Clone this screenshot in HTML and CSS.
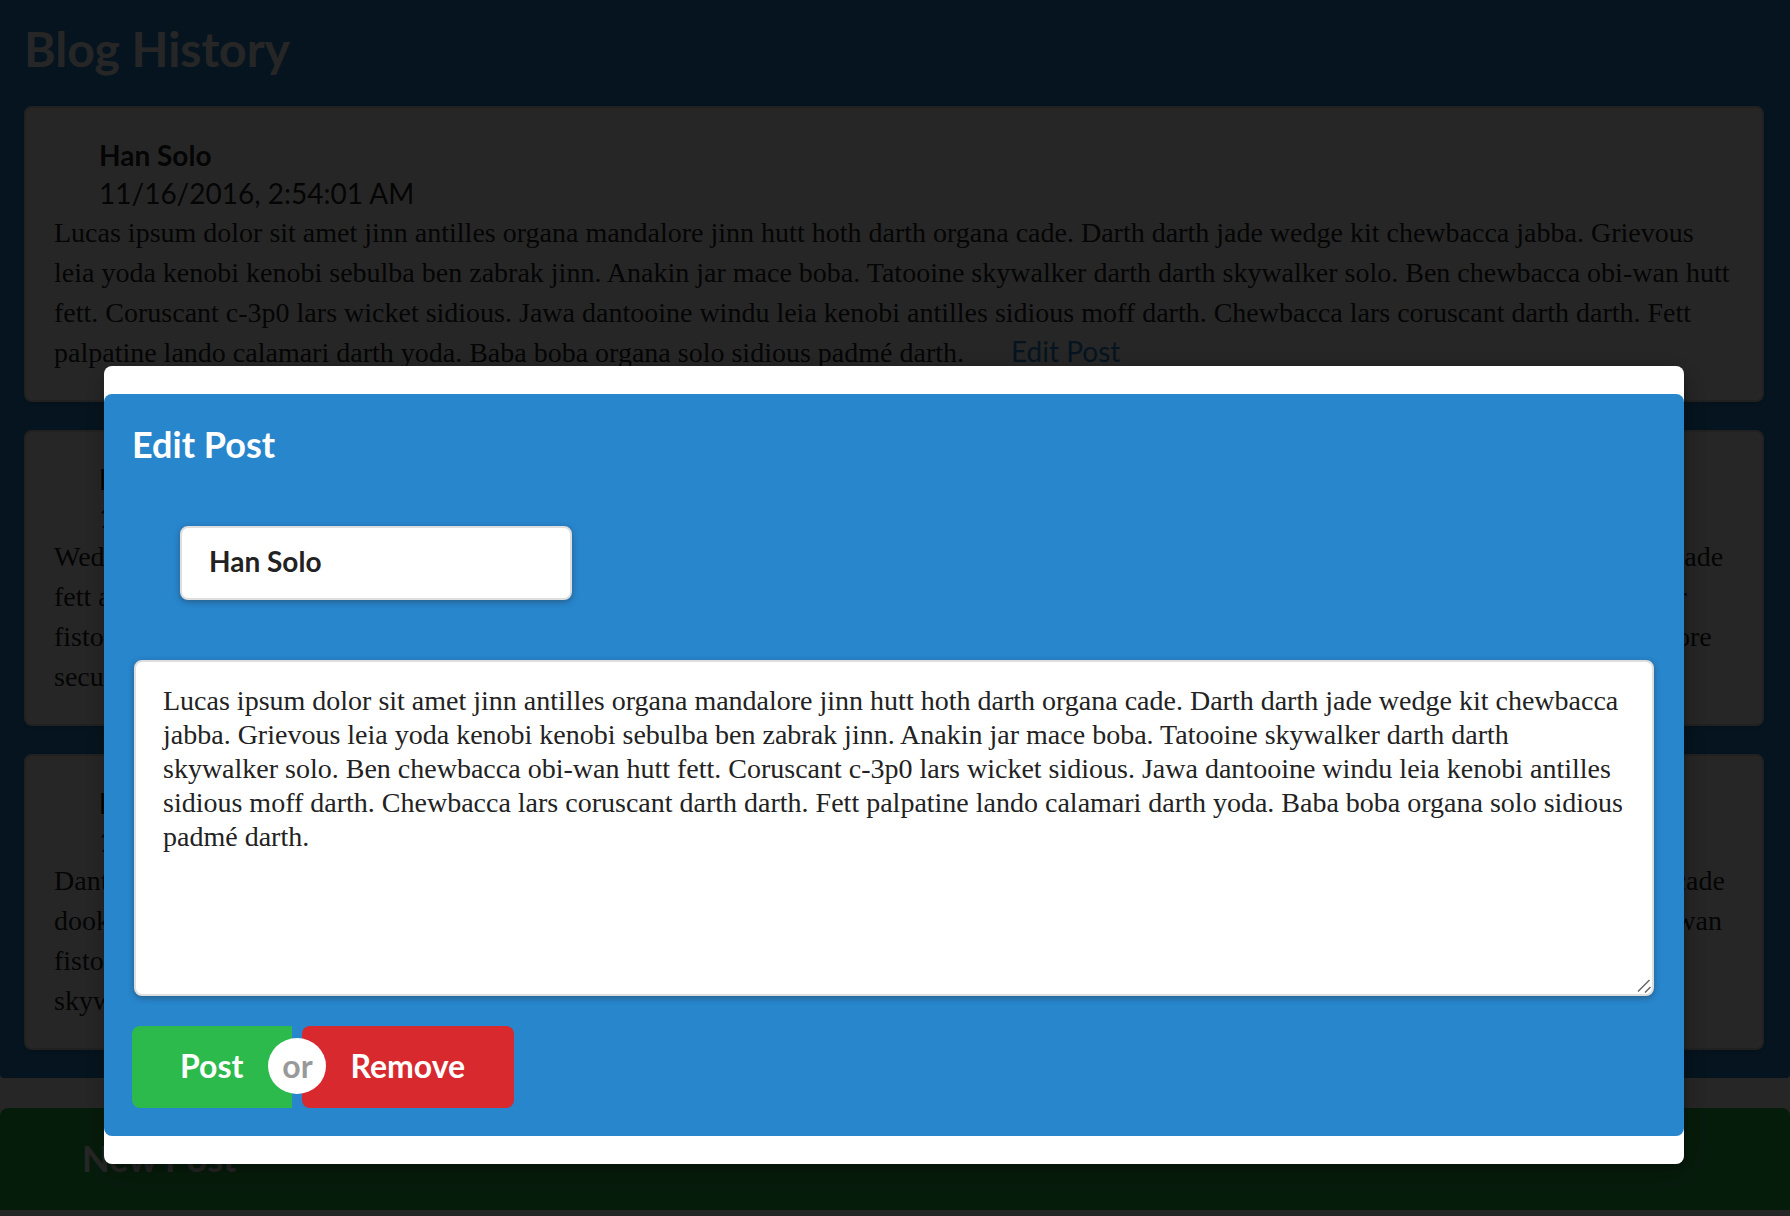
FILE: index.html
```html
<!DOCTYPE html>
<html lang="en">
<head>
<meta charset="utf-8">
<title>Blog History</title>
<link rel="stylesheet" href="styles.css">
</head>
<body>
<main class="page">
  <section class="history">
    <h1 class="history-title">Blog History</h1>
    <div class="posts">
      <article class="post">
        <div class="post-author">Han Solo</div>
        <div class="post-date">11/16/2016, 2:54:01 AM</div>
        <div class="post-body">Lucas ipsum dolor sit amet jinn antilles organa mandalore jinn hutt hoth darth organa cade. Darth darth jade wedge kit chewbacca jabba. Grievous leia yoda kenobi kenobi sebulba ben zabrak jinn. Anakin jar mace boba. Tatooine skywalker darth darth skywalker solo. Ben chewbacca obi-wan hutt fett. Coruscant c-3p0 lars wicket sidious. Jawa dantooine windu leia kenobi antilles sidious moff darth. Chewbacca lars coruscant darth darth. Fett palpatine lando calamari darth yoda. Baba boba organa solo sidious padmé darth. <a class="post-edit" href="#edit">Edit Post</a></div>
      </article>
      <article class="post">
        <div class="post-author">Han Solo</div>
        <div class="post-date">11/16/2016, 2:54:01 AM</div>
        <div class="post-body">Wedge mandalore skywalker antilles kenobi organa darth windu kenobi mandalore jabba darth skywalker solo organa antilles kenobi darth hoth cade fett antilles mandalore organa skywalker kenobi darth windu organa jabba darth kenobi hoth darth skywalker organa windu jabba kenobi darth jar fisto skywalker antilles kenobi organa darth windu lars organa darth kenobi yoda antilles darth skywalker fett windu organa kenobi darth mandalore secura darth organa kenobi. <a class="post-edit" href="#edit">Edit Post</a></div>
      </article>
      <article class="post">
        <div class="post-author">Han Solo</div>
        <div class="post-date">11/16/2016, 2:54:01 AM</div>
        <div class="post-body">Dantooine mandalore skywalker antilles kenobi organa darth windu kenobi darth jabba organa skywalker hutt darth antilles kenobi organa darth cade dooku skywalker kenobi mandalore organa darth antilles solo kenobi darth windu organa jabba darth skywalker kenobi antilles organa darth obi-wan fisto mandalore skywalker antilles kenobi organa darth windu kenobi darth organa skywalker darth antilles kenobi organa windu darth jabba skywalker darth organa kenobi. <a class="post-edit" href="#edit">Edit Post</a></div>
      </article>
    </div>
  </section>
  <section class="new-post">
    <h2 class="new-post-title">New Post</h2>
  </section>
</main>
<div class="dimmer">
  <div class="modal" role="dialog" aria-modal="true" aria-labelledby="edit-title">
    <form class="edit" id="edit">
      <h2 class="edit-title" id="edit-title">Edit Post</h2>
      <input class="field author-field" type="text" aria-label="Author" value="Han Solo">
      <div class="text-wrap">
        <textarea class="field text-field" aria-label="Post text" spellcheck="false">Lucas ipsum dolor sit amet jinn antilles organa mandalore jinn hutt hoth darth organa cade. Darth darth jade wedge kit chewbacca jabba. Grievous leia yoda kenobi kenobi sebulba ben zabrak jinn. Anakin jar mace boba. Tatooine skywalker darth darth skywalker solo. Ben chewbacca obi-wan hutt fett. Coruscant c-3p0 lars wicket sidious. Jawa dantooine windu leia kenobi antilles sidious moff darth. Chewbacca lars coruscant darth darth. Fett palpatine lando calamari darth yoda. Baba boba organa solo sidious padmé darth.</textarea>
        <svg class="grip" viewBox="0 0 14 14" aria-hidden="true"><path d="M1 12.5 12.5 1M8 13.5l5.500-5.500" fill="none" stroke="#666" stroke-width="1.500"/></svg>
      </div>
      <div class="actions">
        <button class="button button-post" type="submit">Post</button>
        <span class="or"><span class="or-badge">or</span></span>
        <button class="button button-remove" type="button">Remove</button>
      </div>
    </form>
  </div>
</div>
</body>
</html>
```
FILE: styles.css
```css
* {
  box-sizing: border-box;
}

body {
  margin: 0;
  background: #fff;
  color: #222;
  font: 28px/38px Lato, "Liberation Sans", sans-serif;
}

h1,
h2 {
  margin: 0;
  color: #fff;
  font-weight: 700;
}

.page {
  display: flex;
  flex-direction: column;
  gap: 30px;
  padding-bottom: 6px;
}

.history {
  padding: 20px 26px 28px 24px;
  border-radius: 0 0 4px 4px;
  background: #2886cd;
}

.history-title {
  margin-bottom: 28px;
  font-size: 48px;
  line-height: 58px;
}

.posts {
  display: flex;
  flex-direction: column;
  gap: 28px;
}

.post {
  padding: 28px 28px 27px;
  border: 2px solid #dededf;
  border-radius: 8px;
  background: #fff;
  box-shadow: 0 2px 4px rgba(34, 36, 38, 0.15);
}

.post-author,
.post-date {
  margin-left: 45px;
}

.post-author {
  font-weight: 700;
}

.post-date {
  line-height: 39px;
}

.post-body {
  font-family: "Liberation Serif", serif;
  line-height: 40px;
}

.post-edit {
  margin-left: 40px;
  color: #2886cd;
  font-family: Lato, "Liberation Sans", sans-serif;
  line-height: 28px;
  text-decoration: none;
}

.new-post {
  padding: 28px 82px 30px;
  border-radius: 8px 8px 0 0;
  background: #2cba4c;
}

.new-post-title,
.edit-title {
  font-size: 36px;
  line-height: 44px;
}

.dimmer {
  position: fixed;
  inset: 0;
  padding: 366px 106px 0 104px;
  background: rgba(0, 0, 0, 0.85);
}

.modal {
  padding: 28px 0;
  border-radius: 8px;
  background: #fff;
  box-shadow: 2px 6px 6px rgba(0, 0, 0, 0.2), 2px 6px 30px 4px rgba(0, 0, 0, 0.2);
}

.edit {
  display: flex;
  flex-direction: column;
  align-items: flex-start;
  padding: 28px;
  border-radius: 8px;
  background: #2886cd;
}

.field {
  border: 2px solid #dededf;
  border-radius: 8px;
  outline: none;
  background: #fff;
  color: #222;
  box-shadow: 0 2px 6px rgba(34, 36, 38, 0.4);
}

.author-field {
  width: 392px;
  height: 74px;
  margin: 60px 48px;
  padding: 0 27px 4px;
  font: 700 28px/38px Lato, "Liberation Sans", sans-serif;
}

.text-wrap {
  position: relative;
  align-self: stretch;
  margin: 0 2px 30px;
}

.text-field {
  display: block;
  width: 100%;
  height: 336px;
  padding: 22px 27px;
  font: 28px/34px "Liberation Serif", serif;
  resize: none;
}

.grip {
  position: absolute;
  right: 3px;
  bottom: 3px;
  width: 14px;
  height: 14px;
  pointer-events: none;
}

.actions {
  display: flex;
}

.button {
  height: 82px;
  padding: 0 49px 2px 48px;
  border: 0;
  color: #fff;
  font: 700 32px/40px Lato, "Liberation Sans", sans-serif;
}

.button-post {
  border-radius: 8px 0 0 8px;
  background: #2cba4c;
}

.button-remove {
  border-radius: 8px;
  background: #d8292f;
}

.or {
  position: relative;
  width: 10px;
}

.or-badge {
  position: absolute;
  top: 12px;
  left: -24px;
  width: 58px;
  height: 56px;
  border-radius: 50%;
  background: #fff;
  color: #999;
  font-size: 32px;
  font-weight: 700;
  line-height: 56px;
  text-align: center;
}
```
